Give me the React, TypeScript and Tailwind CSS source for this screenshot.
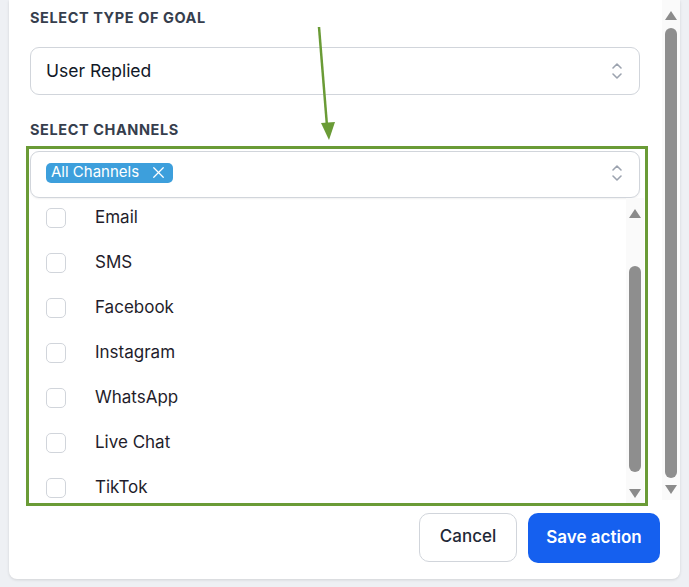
import { X } from 'lucide-react'

const channels = ['Email', 'SMS', 'Facebook', 'Instagram', 'WhatsApp', 'Live Chat', 'TikTok']

function UpDownIcon() {
  return (
    <svg width="12" height="18" viewBox="0 0 12 18" fill="none" stroke="#9ca3af" strokeWidth="1.6" strokeLinecap="round" strokeLinejoin="round">
      <path d="M2 6l4-4 4 4" />
      <path d="M2 12l4 4 4-4" />
    </svg>
  )
}

function ScrollTrack({ thumbTop, thumbBottom, height }: { thumbTop: number; thumbBottom: number; height: number }) {
  return (
    <div className="relative w-[18px] bg-[#fafafa]" style={{ height }}>
      <svg className="absolute left-[3px] top-[11px]" width="12" height="9" viewBox="0 0 12 9">
        <path d="M6 0L12 9H0Z" fill="#8b8b8b" />
      </svg>
      <div
        className="absolute left-[3px] w-[12px] rounded-full bg-[#8e8e8e]"
        style={{ top: thumbTop, height: thumbBottom - thumbTop }}
      />
      <svg className="absolute left-[3px] bottom-[6px]" width="12" height="9" viewBox="0 0 12 9">
        <path d="M0 0H12L6 9Z" fill="#8b8b8b" />
      </svg>
    </div>
  )
}

export default function App() {
  return (
    <div className="relative h-[587px] w-[689px] overflow-hidden bg-[#eef0f4] font-['Inter',sans-serif]">
      <div className="ml-[9px] flex h-[579px] w-[671px] rounded-b-lg bg-white shadow-[0_1px_3px_rgba(0,0,0,0.12)]">
        {/* form column */}
        <div className="flex w-[652px] flex-col pl-[21px]">
          <p className="mt-[7px] text-[14.5px] font-bold uppercase tracking-[0.04em] text-[#363e4d]">Select type of goal</p>

          <div className="mt-[18px] flex h-[48px] w-[610px] items-center justify-between rounded-[9px] border border-[#d1d5db] pl-[15px] pr-[16px]">
            <span className="text-[17.5px] text-[#111827]">User Replied</span>
            <UpDownIcon />
          </div>

          <p className="mt-[24px] text-[14.5px] font-bold uppercase tracking-[0.04em] text-[#363e4d]">Select channels</p>

          <div className="mt-[10px] flex h-[47px] w-[610px] items-center justify-between rounded-[9px] border border-[#d1d5db] pb-[3px] pl-[15px] pr-[16px] shadow-[0_1px_2px_rgba(0,0,0,0.06)]">
            <span className="flex h-[20px] items-center gap-[10px] rounded-[5px] bg-[#3d9fdc] pl-[5px] pr-[5px] text-[15px] text-white">
              All Channels
              <X size={19} strokeWidth={1.6} />
            </span>
            <UpDownIcon />
          </div>

          {/* channel options */}
          <div className="flex h-[306px] w-[614px]">
            <div className="flex-1 overflow-hidden">
              <ul className="-mt-[2px]">
                {channels.map((c) => (
                  <li key={c} className="flex h-[45px] items-center pl-[16px]">
                    <span className="h-[20px] w-[20px] rounded-[5px] border border-[#d1d5db] bg-white" />
                    <span className="ml-[29px] text-[17px] text-[#1f1d2b]">{c}</span>
                  </li>
                ))}
              </ul>
            </div>
            <ScrollTrack thumbTop={68} thumbBottom={274} height={306} />
          </div>

          <div className="mt-[9px] flex w-[630px] justify-end gap-[11px]">
            <button className="h-[49px] w-[98px] rounded-[10px] border border-[#d1d5db] bg-white text-[17px] font-medium text-[#1f2937]">
              Cancel
            </button>
            <button className="h-[50px] w-[132px] rounded-[10px] bg-[#1560ef] text-[17px] font-semibold text-white">
              Save action
            </button>
          </div>
        </div>

        {/* page scrollbar */}
        <div className="ml-[2px]">
          <ScrollTrack thumbTop={28} thumbBottom={478} height={500} />
        </div>
      </div>

      {/* annotation */}
      <div className="pointer-events-none absolute left-[26px] top-[146px] h-[360px] w-[622px] border-[3px] border-[#6a9b36]" />
      <svg className="pointer-events-none absolute left-0 top-0" width="689" height="587">
        <line x1="319" y1="27" x2="327" y2="126" stroke="#6a9b36" strokeWidth="2.5" />
        <path d="M321 123L335 122L329 140Z" fill="#6a9b36" />
      </svg>
    </div>
  )
}
